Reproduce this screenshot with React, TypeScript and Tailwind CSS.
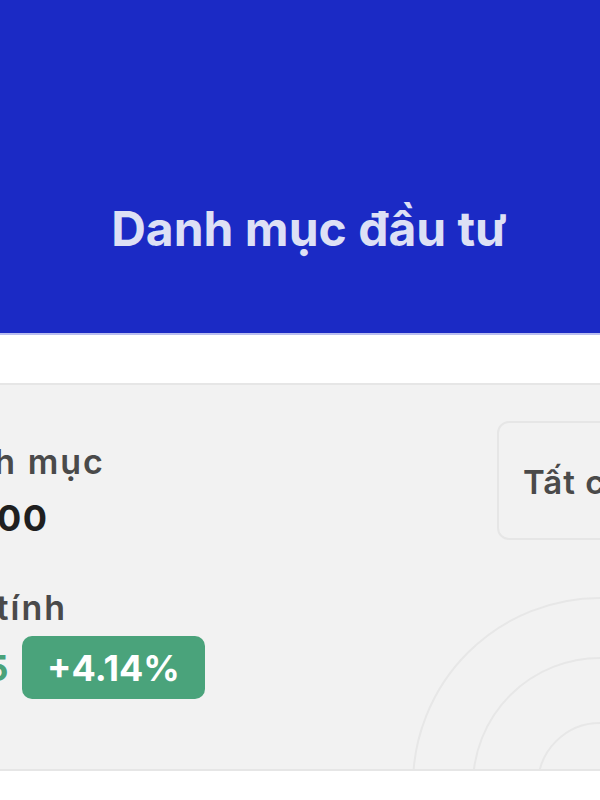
import React from 'react';

const Rings: React.FC = () => (
    <svg className="absolute -right-[182px] -bottom-[216px] pointer-events-none" width="400" height="400" viewBox="0 0 400 400" fill="none">
        <circle cx="200" cy="200" r="62" stroke="#e7e7e7" strokeWidth="2" />
        <circle cx="200" cy="200" r="127" stroke="#e7e7e7" strokeWidth="2" />
        <circle cx="200" cy="200" r="187" stroke="#e7e7e7" strokeWidth="2" />
    </svg>
);

export default function App() {
    return (
        <div className="w-[600px] h-[800px] overflow-hidden bg-white font-['Inter',sans-serif]">
            {/* Header */}
            <div className="h-[333px] bg-[#1b2ac5] flex flex-col items-center pt-[205px] pl-[18px]">
                <h1 className="text-[48px] leading-[48px] font-bold text-[#dde0f5]">Danh mục đầu tư</h1>
            </div>
            <div className="h-[2px] bg-[#b9bef0]" />

            {/* Portfolio summary card */}
            <div className="mt-[48px] -mx-5 h-[388px] relative overflow-hidden rounded-2xl border-2 border-[#e6e6e6] bg-[#f2f2f2] flex">
                <Rings />

                <div className="relative shrink-0 -ml-[177px] pt-[59px] flex flex-col">
                    <span className="text-[34px] leading-[36px] tracking-[2px] font-semibold text-[#4a4a4a]">Giá trị danh mục</span>
                    <span className="mt-[18px] text-[36px] leading-[40px] tracking-[1.5px] font-bold text-[#1f1f1f]">125.460.000</span>
                    <span className="mt-[52px] text-[34px] leading-[36px] tracking-[2px] font-semibold text-[#4a4a4a]">Lãi/lỗ tạm tính</span>
                    <div className="mt-[10px] flex items-center gap-[13px]">
                        <span className="text-[36px] leading-[40px] tracking-[0.5px] font-bold text-[#4aa27a]">+5.194.065</span>
                        <span className="h-[63px] px-[25px] rounded-[10px] bg-[#4aa37b] flex items-center text-[36px] font-bold text-white">+4.14%</span>
                    </div>
                </div>

                <button className="relative ml-auto -mr-[69px] mt-[36px] shrink-0 w-[190px] h-[119px] rounded-xl border-2 border-[#e6e6e6] bg-[#f2f2f2] flex items-center pt-[4px] px-[24px] text-[33px] tracking-[1px] font-semibold text-[#4a4a4a]">
                    Tất cả
                </button>
            </div>
        </div>
    );
}
